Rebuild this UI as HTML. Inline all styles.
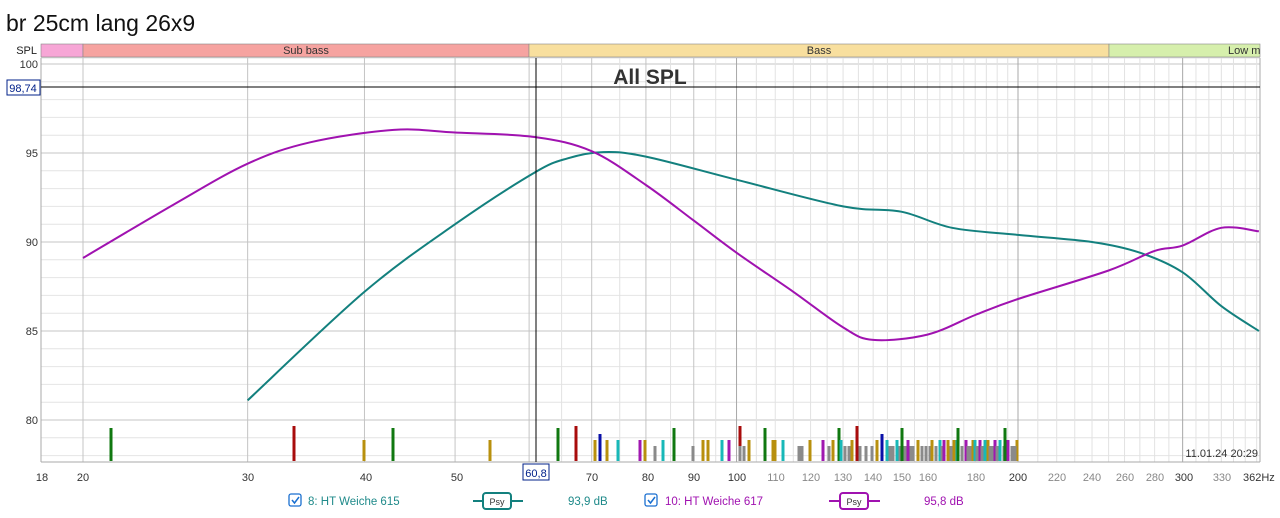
<!DOCTYPE html>
<html><head><meta charset="utf-8"><style>
body{margin:0;width:1280px;height:513px;background:#fff;overflow:hidden;font-family:"Liberation Sans",sans-serif;}
</style></head><body>
<svg id="s" width="1280" height="513" xmlns="http://www.w3.org/2000/svg" font-family="Liberation Sans, sans-serif">
<text x="6" y="31" font-size="23" fill="#111">br 25cm lang 26x9</text>
<text x="37" y="54" font-size="11" fill="#222" text-anchor="end">SPL</text>
<rect x="41" y="44" width="42" height="13" fill="#f7a6d6" stroke="#888" stroke-width="0.6"/>
<rect x="83" y="44" width="446" height="13" fill="#f6a3a0" stroke="#888" stroke-width="0.6"/>
<rect x="529" y="44" width="580" height="13" fill="#f8df9e" stroke="#888" stroke-width="0.6"/>
<rect x="1109" y="44" width="151" height="13" fill="#d6efac" stroke="#888" stroke-width="0.6"/>
<text x="306" y="54" font-size="11" fill="#333" text-anchor="middle">Sub bass</text>
<text x="819" y="54" font-size="11" fill="#333" text-anchor="middle">Bass</text>
<text x="1228" y="54" font-size="11" fill="#333">Low m</text>
<g id="grid"></g>
<g id="bars"></g>
<path id="teal" fill="none" stroke="#13807e" stroke-width="2"/>
<path id="purp" fill="none" stroke="#a012b0" stroke-width="2"/>
<line x1="536" y1="58" x2="536" y2="462" stroke="#000" stroke-width="1"/>
<line x1="41" y1="87" x2="1260" y2="87" stroke="#000" stroke-width="1"/>
<text x="650" y="84" font-size="21" font-weight="bold" fill="#333" text-anchor="middle">All SPL</text>
<g font-size="11" fill="#333" text-anchor="end">
<text x="38" y="68">100</text><text x="38" y="157">95</text><text x="38" y="246">90</text><text x="38" y="335">85</text><text x="38" y="424">80</text>
</g>
<rect x="7" y="80" width="33" height="15" fill="#fff" stroke="#00208a"/>
<text x="23" y="92" font-size="11" fill="#00208a" text-anchor="middle">98,74</text>
<g font-size="11" fill="#333" text-anchor="middle">
<text x="42" y="481">18</text><text x="83" y="481">20</text><text x="248" y="481">30</text><text x="366" y="481">40</text><text x="457" y="481">50</text>
<text x="592" y="481">70</text><text x="648" y="481">80</text><text x="694" y="481">90</text><text x="737" y="481">100</text>
<text x="1018" y="481">200</text><text x="1184" y="481">300</text>
</g>
<g font-size="11" fill="#888" text-anchor="middle">
<text x="776" y="481">110</text><text x="811" y="481">120</text><text x="843" y="481">130</text><text x="873" y="481">140</text><text x="902" y="481">150</text><text x="928" y="481">160</text><text x="976" y="481">180</text>
<text x="1057" y="481">220</text><text x="1092" y="481">240</text><text x="1125" y="481">260</text><text x="1155" y="481">280</text><text x="1222" y="481">330</text>
</g>
<text x="1243" y="481" font-size="11" fill="#333">362Hz</text>
<rect x="523" y="464" width="26" height="16" fill="#fff" stroke="#00208a"/>
<text x="536" y="477" font-size="11" fill="#00208a" text-anchor="middle">60,8</text>
<text x="1258" y="457" font-size="11" fill="#333" text-anchor="end">11.01.24 20:29</text>
<rect x="289" y="494" width="12" height="12" rx="2" fill="#fff" stroke="#1a6fd0" stroke-width="1.3"/>
<path d="M292 500l2.5 3 4.5-6" fill="none" stroke="#1a6fd0" stroke-width="1.5"/>
<text x="308" y="505" font-size="11.5" fill="#1f8a8a">8: HT Weiche 615</text>
<line x1="473" y1="501" x2="523" y2="501" stroke="#13807e" stroke-width="2"/>
<rect x="483" y="493" width="28" height="16" rx="3" fill="#fff" stroke="#13807e" stroke-width="2"/>
<text x="497" y="505" font-size="9" fill="#333" text-anchor="middle">Psy</text>
<text x="568" y="505" font-size="11.5" fill="#1f8a8a">93,9 dB</text>
<rect x="645" y="494" width="12" height="12" rx="2" fill="#fff" stroke="#1a6fd0" stroke-width="1.3"/>
<path d="M648 500l2.5 3 4.5-6" fill="none" stroke="#1a6fd0" stroke-width="1.5"/>
<text x="665" y="505" font-size="11.5" fill="#a012b0">10: HT Weiche 617</text>
<line x1="829" y1="501" x2="880" y2="501" stroke="#a012b0" stroke-width="2"/>
<rect x="840" y="493" width="28" height="16" rx="3" fill="#fff" stroke="#a012b0" stroke-width="2"/>
<text x="854" y="505" font-size="9" fill="#333" text-anchor="middle">Psy</text>
<text x="924" y="505" font-size="11.5" fill="#a012b0">95,8 dB</text>
</svg>
<script>
var NS="http://www.w3.org/2000/svg";
function X(f){return 83+935*Math.log10(f/20);}
function Y(d){return 64+(100-d)*17.8;}
function el(p,t,a){var e=document.createElementNS(NS,t);for(var k in a)e.setAttribute(k,a[k]);p.appendChild(e);return e;}
var g=document.getElementById('grid');
for(var d=78;d<=100;d++){el(g,'line',{x1:41,x2:1260,y1:Y(d),y2:Y(d),stroke:d%5==0?'#c4c4c4':'#e4e4e4','stroke-width':1});}
el(g,'line',{x1:41,x2:1260,y1:Y(100.35),y2:Y(100.35),stroke:'#c4c4c4'});
var fs=[20,30,40,50,60,65,70,75,80,85,90,95,100,105,110,115,120,125,130,135,140,145,150,155,160,165,170,175,180,185,190,195,200,210,220,230,240,250,260,270,280,290,300,310,320,330,340,350,360];
var major=[20,30,40,50,60,70,80,90,100,200,300];
fs.forEach(function(f){var m=major.indexOf(f)>=0;el(g,'line',{x1:X(f),x2:X(f),y1:58,y2:462,stroke:m?(f==100||f==200||f==300?'#a8a8a8':'#c4c4c4'):'#e2e2e2'});});
el(g,'line',{x1:41,x2:41,y1:58,y2:462,stroke:'#aaa'});
el(g,'line',{x1:1260,x2:1260,y1:58,y2:462,stroke:'#aaa'});
el(g,'line',{x1:41,x2:1260,y1:462,y2:462,stroke:'#aaa'});
var b=document.getElementById('bars');
var C={g:'#107810',r:'#a80c0c',y:'#b8900e',b:'#0a10a8',c:'#18b8b8',m:'#a018b0',k:'#8a8a8a'};
var T={g:428,r:426,y:440,b:434,c:440,m:440,k:446};
var bars="111g 294r 364y 393g 490y 558g 576r 595y 600b 607y 618c 640m 645y 655k 663c 674g 693k 703y 708y 722c 729m 740r 740k 744k 749y 765g 773y 775y 783c 799k 802k 810y 823m 829k 833y 839g 841c 845k 849k 852y 857r 860k 866k 872k 877y 882b 887c 890k 893k 897c 900k 902g 905k 908m 911k 913k 918y 922k 926k 930k 932y 936k 940c 942k 944m 948y 951k 954y 957c 958g 962k 966m 968k 970k 973y 975c 977k 980m 982k 985c 988y 990k 993k 995m 997k 1000c 1004k 1005g 1008m 1012k 1017y 1015k";
bars.split(' ').forEach(function(s){var x=parseFloat(s),c=s.slice(-1);el(b,'rect',{x:x-1.5,y:T[c],width:3,height:461-T[c],fill:C[c]});});
function cr(p){var d='M'+p[0][0]+' '+p[0][1];for(var i=0;i<p.length-1;i++){var p0=p[i-1]||p[i],p1=p[i],p2=p[i+1],p3=p[i+2]||p2;d+=' C'+(p1[0]+(p2[0]-p0[0])/6)+' '+(p1[1]+(p2[1]-p0[1])/6)+' '+(p2[0]-(p3[0]-p1[0])/6)+' '+(p2[1]-(p3[1]-p1[1])/6)+' '+p2[0]+' '+p2[1];}return d;}
var P=[[20,89.1],[25,92.1],[30,94.4],[35,95.6],[43,96.3],[50,96.15],[60.8,95.9],[70,95.1],[80,93.2],[90,91.2],[100,89.4],[115,87.2],[130,85.2],[140,84.5],[160,84.8],[180,85.9],[200,86.8],[250,88.4],[280,89.5],[300,89.8],[330,90.8],[362,90.6]];
var Tl=[[30,81.1],[40,87.2],[50,91],[60.8,93.9],[66,94.7],[72,95.05],[80,94.8],[100,93.5],[130,92],[150,91.7],[170,90.8],[200,90.4],[240,90],[270,89.4],[300,88.3],[330,86.4],[362,85]];
function conv(a){return a.map(function(p){return[X(p[0]).toFixed(1),Y(p[1]).toFixed(1)].map(Number);});}
document.getElementById('purp').setAttribute('d',cr(conv(P)));
document.getElementById('teal').setAttribute('d',cr(conv(Tl)));
</script>
</body></html>
